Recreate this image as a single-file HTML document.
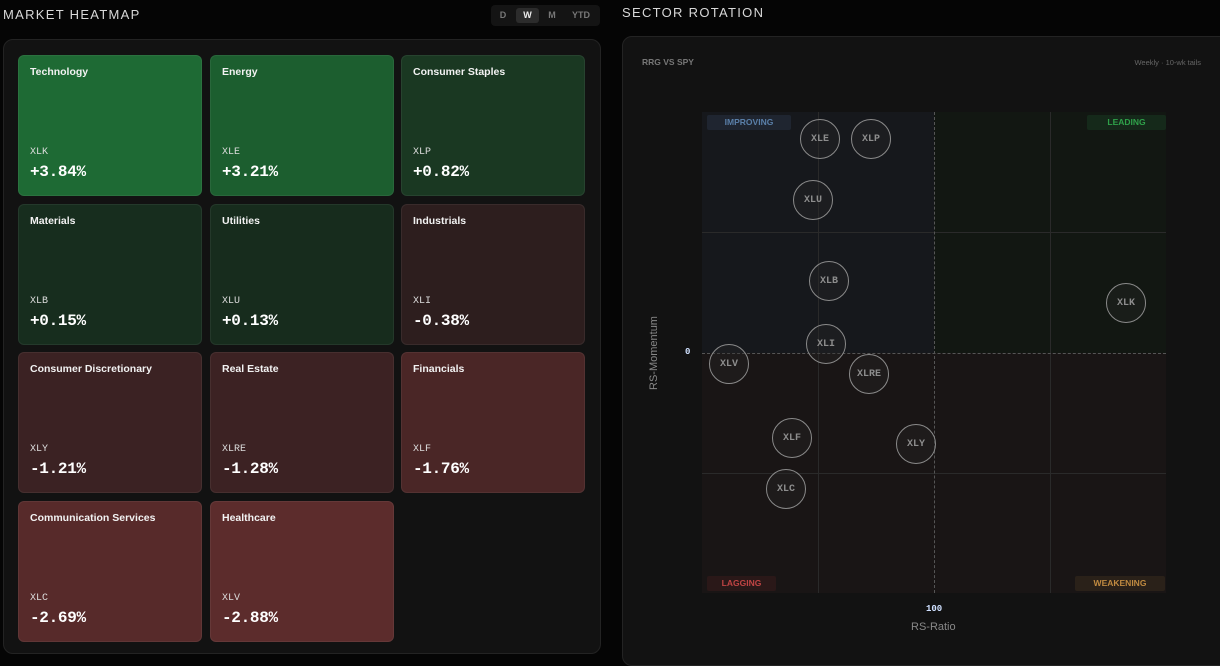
<!DOCTYPE html>
<html><head><meta charset="utf-8"><style>
*{margin:0;padding:0;box-sizing:border-box}
body{width:1220px;height:655px;background:#050505;font-family:"Liberation Sans",sans-serif;position:relative;overflow:hidden;color:#fff}
.h{position:absolute;font-size:13px;letter-spacing:1.3px;color:#d8d8d8}
.tog{position:absolute;left:491px;top:5px;width:109px;height:21px;background:#141414;border-radius:4px}
.tog span{position:absolute;top:3px;height:15px;font-size:9px;font-weight:bold;color:#777;line-height:15px;text-align:center}
.panel{position:absolute;background:#121212;border:1px solid #232323;border-radius:10px}
.t{position:absolute;width:184px;height:141px;border-radius:6px;border:1px solid rgba(255,255,255,.06)}
.t .n{position:absolute;left:11px;top:10px;font-size:10.5px;font-weight:bold;color:#f2f2f2}
.t .k{position:absolute;left:11px;top:91px;font-family:"Liberation Mono",monospace;font-size:10px;color:#ddd}
.t .p{position:absolute;left:11px;top:107px;font-family:"Liberation Mono",monospace;font-size:16px;font-weight:bold;color:#fff;letter-spacing:-0.3px}
.c{position:absolute;width:40px;height:40px;margin:-20px 0 0 -20px;border:1px solid #8a8a8a;border-radius:50%;background:rgba(40,40,40,.35);font-family:"Liberation Mono",monospace;font-size:10px;font-weight:bold;color:#8d8d8d;text-align:center;line-height:40px}
.lab{position:absolute;font-size:8.5px;font-weight:bold;text-align:center;line-height:15px;height:15px;border-radius:2px}
</style></head><body>
<div class="h" style="left:3px;top:7px">MARKET HEATMAP</div>
<div class="tog"><span style="left:5px;width:14px">D</span><span style="left:25px;width:23px;background:#2c2c2c;color:#eee;border-radius:3px">W</span><span style="left:53px;width:16px">M</span><span style="left:78px;width:24px">YTD</span></div>
<div class="panel" style="left:3px;top:39px;width:598px;height:615px"></div>

<div class="t" style="left:18px;top:55px;background:#1e6a34"><div class="n">Technology</div><div class="k">XLK</div><div class="p">+3.84%</div></div>
<div class="t" style="left:210px;top:55px;background:#1c5e2f"><div class="n">Energy</div><div class="k">XLE</div><div class="p">+3.21%</div></div>
<div class="t" style="left:401px;top:55px;background:#1a3822"><div class="n">Consumer Staples</div><div class="k">XLP</div><div class="p">+0.82%</div></div>
<div class="t" style="left:18px;top:204px;background:#172d1e"><div class="n">Materials</div><div class="k">XLB</div><div class="p">+0.15%</div></div>
<div class="t" style="left:210px;top:204px;background:#172c1d"><div class="n">Utilities</div><div class="k">XLU</div><div class="p">+0.13%</div></div>
<div class="t" style="left:401px;top:204px;background:#2d1e1e"><div class="n">Industrials</div><div class="k">XLI</div><div class="p">-0.38%</div></div>
<div class="t" style="left:18px;top:352px;background:#3b2223"><div class="n">Consumer Discretionary</div><div class="k">XLY</div><div class="p">-1.21%</div></div>
<div class="t" style="left:210px;top:352px;background:#3c2223"><div class="n">Real Estate</div><div class="k">XLRE</div><div class="p">-1.28%</div></div>
<div class="t" style="left:401px;top:352px;background:#4a2626"><div class="n">Financials</div><div class="k">XLF</div><div class="p">-1.76%</div></div>
<div class="t" style="left:18px;top:501px;background:#572a2a"><div class="n">Communication Services</div><div class="k">XLC</div><div class="p">-2.69%</div></div>
<div class="t" style="left:210px;top:501px;background:#5c2c2c"><div class="n">Healthcare</div><div class="k">XLV</div><div class="p">-2.88%</div></div>

<div class="h" style="left:622px;top:5px">SECTOR ROTATION</div>
<div class="panel" style="left:622px;top:36px;width:610px;height:630px"></div>
<div style="position:absolute;left:642px;top:57px;font-size:8.5px;font-weight:bold;color:#777">RRG VS SPY</div>
<div style="position:absolute;right:19px;top:58px;font-size:7.5px;color:#666">Weekly · 10-wk tails</div>

<div style="position:absolute;left:702px;top:112px;width:232px;height:241px;background:#16181c"></div>
<div style="position:absolute;left:934px;top:112px;width:232px;height:241px;background:#121712"></div>
<div style="position:absolute;left:702px;top:353px;width:464px;height:240px;background:#191515"></div>
<div style="position:absolute;left:818px;top:112px;width:1px;height:481px;background:#2a2a2a"></div>
<div style="position:absolute;left:1050px;top:112px;width:1px;height:481px;background:#2a2a2a"></div>
<div style="position:absolute;left:702px;top:232px;width:464px;height:1px;background:#2a2a2a"></div>
<div style="position:absolute;left:702px;top:473px;width:464px;height:1px;background:#2a2a2a"></div>
<div style="position:absolute;left:934px;top:112px;height:481px;border-left:1px dashed #555"></div>
<div style="position:absolute;left:702px;top:353px;width:464px;border-top:1px dashed #555"></div>

<div class="lab" style="left:707px;top:115px;width:84px;background:#1f2530;color:#5a7fa8">IMPROVING</div>
<div class="lab" style="left:1087px;top:115px;width:79px;background:#15291a;color:#2fa14a">LEADING</div>
<div class="lab" style="left:707px;top:576px;width:69px;background:#2a1818;color:#c04444">LAGGING</div>
<div class="lab" style="left:1075px;top:576px;width:90px;background:#2a2119;color:#c08a40">WEAKENING</div>

<div class="c" style="left:820px;top:139px">XLE</div>
<div class="c" style="left:871px;top:139px">XLP</div>
<div class="c" style="left:813px;top:200px">XLU</div>
<div class="c" style="left:829px;top:281px">XLB</div>
<div class="c" style="left:1126px;top:303px">XLK</div>
<div class="c" style="left:826px;top:344px">XLI</div>
<div class="c" style="left:729px;top:364px">XLV</div>
<div class="c" style="left:869px;top:374px">XLRE</div>
<div class="c" style="left:792px;top:438px">XLF</div>
<div class="c" style="left:916px;top:444px">XLY</div>
<div class="c" style="left:786px;top:489px">XLC</div>

<div style="position:absolute;left:685px;top:347px;font-family:'Liberation Mono',monospace;font-size:9px;font-weight:bold;color:#cfe0ff">0</div>
<div style="position:absolute;left:926px;top:604px;font-family:'Liberation Mono',monospace;font-size:9px;font-weight:bold;color:#cfe0ff">100</div>
<div style="position:absolute;left:911px;top:621px;font-size:11px;color:#888">RS-Ratio</div>
<div style="position:absolute;left:654px;top:353px;font-size:11px;color:#888;transform:translate(-50%,-50%) rotate(-90deg);white-space:nowrap">RS-Momentum</div>
</body></html>
